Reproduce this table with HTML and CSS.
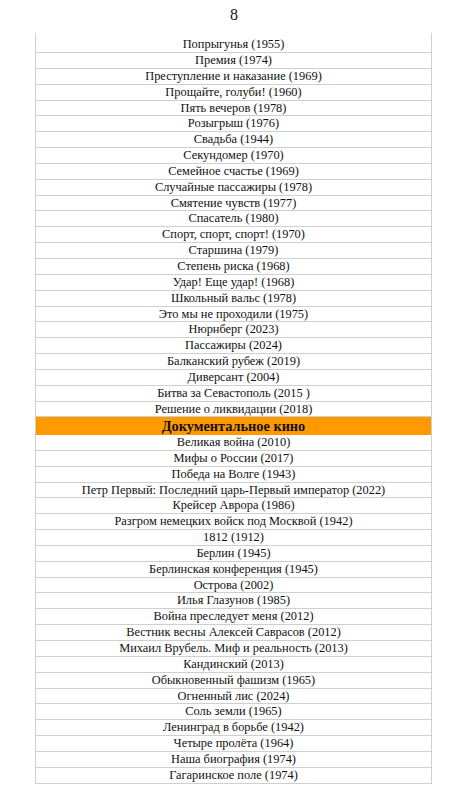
FILE: index.html
```html
<!DOCTYPE html>
<html lang="ru">
<head>
  <meta charset="UTF-8">
  <title>Фильмы</title>
  <link rel="stylesheet" href="styles.css">
</head>
<body>

  <div class="page-num">8</div>

  <!-- список фильмов -->
  <div class="film-table">
    <div class="row first">Попрыгунья (1955)</div>
    <div class="row">Премия (1974)</div>
    <div class="row">Преступление и наказание (1969)</div>
    <div class="row">Прощайте, голуби! (1960)</div>
    <div class="row">Пять вечеров (1978)</div>
    <div class="row">Розыгрыш (1976)</div>
    <div class="row">Свадьба (1944)</div>
    <div class="row">Секундомер (1970)</div>
    <div class="row">Семейное счастье (1969)</div>
    <div class="row">Случайные пассажиры (1978)</div>
    <div class="row">Смятение чувств (1977)</div>
    <div class="row">Спасатель (1980)</div>
    <div class="row">Спорт, спорт, спорт! (1970)</div>
    <div class="row">Старшина (1979)</div>
    <div class="row">Степень риска (1968)</div>
    <div class="row">Удар! Еще удар! (1968)</div>
    <div class="row">Школьный вальс (1978)</div>
    <div class="row">Это мы не проходили (1975)</div>
    <div class="row">Нюрнберг (2023)</div>
    <div class="row">Пассажиры (2024)</div>
    <div class="row">Балканский рубеж (2019)</div>
    <div class="row">Диверсант (2004)</div>
    <div class="row">Битва за Севастополь (2015 )</div>
    <div class="row">Решение о ликвидации (2018)</div>

    <div class="row section">Документальное кино</div>

    <div class="row">Великая война (2010)</div>
    <div class="row">Мифы о России (2017)</div>
    <div class="row">Победа на Волге (1943)</div>
    <div class="row">Петр Первый: Последний царь-Первый император (2022)</div>
    <div class="row">Крейсер Аврора (1986)</div>
    <div class="row">Разгром немецких войск под Москвой (1942)</div>
    <div class="row">1812 (1912)</div>
    <div class="row">Берлин (1945)</div>
    <div class="row">Берлинская конференция (1945)</div>
    <div class="row">Острова (2002)</div>
    <div class="row">Илья Глазунов (1985)</div>
    <div class="row">Война преследует меня (2012)</div>
    <div class="row">Вестник весны Алексей Саврасов (2012)</div>
    <div class="row">Михаил Врубель. Миф и реальность (2013)</div>
    <div class="row">Кандинский (2013)</div>
    <div class="row">Обыкновенный фашизм (1965)</div>
    <div class="row">Огненный лис (2024)</div>
    <div class="row">Соль земли (1965)</div>
    <div class="row">Ленинград в борьбе (1942)</div>
    <div class="row">Четыре пролёта (1964)</div>
    <div class="row">Наша биография (1974)</div>
    <div class="row">Гагаринское поле (1974)</div>
  </div>

</body>
</html>
```

FILE: styles.css
```css
body {
  margin: 0;
  padding: 0;
  background: #fff;
  color: #111;
  font-family: "Liberation Serif", "Times New Roman", serif;
}

.page-num {
  height: 33px;
  padding-left: 6px;
  text-align: center;
  font-size: 16px;
  line-height: 30px;
}

.film-table {
  margin-left: 35px;
  width: 397px;
  box-sizing: border-box;
  border-left: 1px solid #cfcfcf;
  border-right: 1px solid #cfcfcf;
}

.row {
  height: 15.85px;
  box-sizing: border-box;
  border-bottom: 1px solid #cfcfcf;
  text-align: center;
  font-size: 12.4px;
  line-height: 15px;
  white-space: nowrap;
}

.row.first {
  height: 20px;
  line-height: 22px;
}

.row.section {
  height: 17.6px;
  background: #ff9900;
  border-bottom: none;
  font-weight: bold;
  font-size: 14.3px;
  line-height: 18px;
}
```
